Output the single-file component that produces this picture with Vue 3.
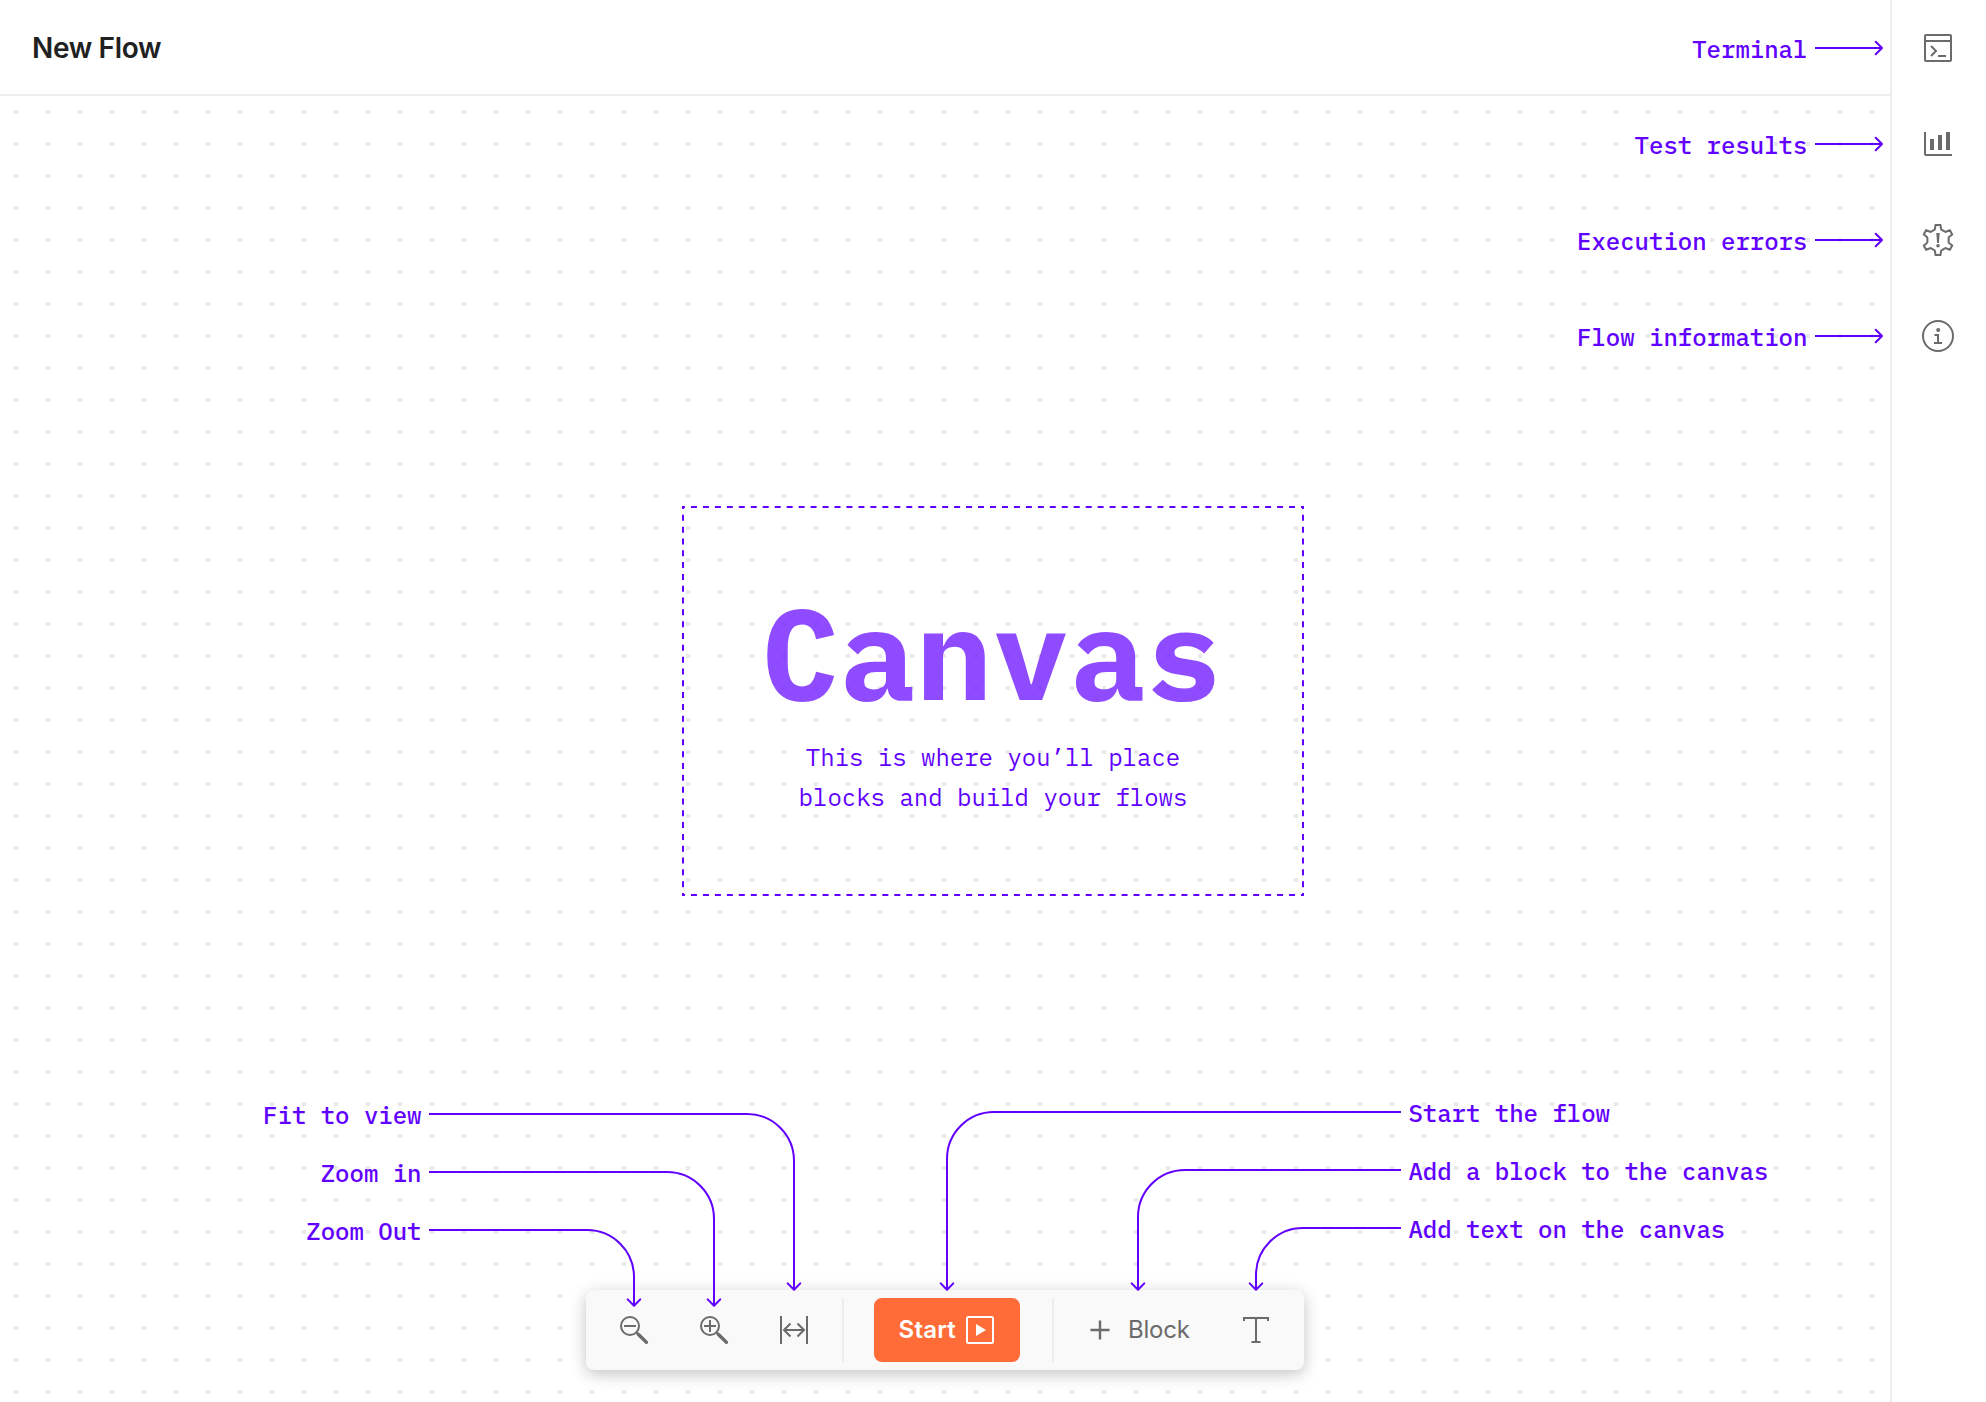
<script setup>
const panelHints = ['Terminal', 'Test results', 'Execution errors', 'Flow information']
const leftHints = ['Fit to view', 'Zoom in', 'Zoom Out']
const rightHints = ['Start the flow', 'Add a block to the canvas', 'Add text on the canvas']

// Connector lines, in page coordinates
const connectors = [
  { d: 'M429 1114H747A47 47 0 0 1 794 1161V1290', x: 794, y: 1290 },
  { d: 'M429 1172H667A47 47 0 0 1 714 1219V1306', x: 714, y: 1306 },
  { d: 'M429 1230H587A47 47 0 0 1 634 1277V1306', x: 634, y: 1306 },
  { d: 'M1401 1112H994A47 47 0 0 0 947 1159V1290', x: 947, y: 1290 },
  { d: 'M1401 1170H1185A47 47 0 0 0 1138 1217V1290', x: 1138, y: 1290 },
  { d: 'M1401 1228H1303A47 47 0 0 0 1256 1275V1290', x: 1256, y: 1290 },
]
</script>

<template>
  <div class="page">
    <div class="main">
      <header class="header">
        <h1>New Flow</h1>
      </header>

      <section class="canvas">
        <div class="dropzone">
          <svg class="dashes" width="622" height="390" fill="none" stroke="#6100ff" stroke-width="2">
            <path d="M0 1H622M0 389H622" stroke-dasharray="6 5.9615" stroke-dashoffset="3" />
            <path d="M1 0V390M621 0V390" stroke-dasharray="6 5.8182" stroke-dashoffset="3" />
          </svg>
          <h2>Canvas</h2>
          <p>This is where you’ll place<br />blocks and build your flows</p>
        </div>

        <nav class="toolbar">
          <div class="group zoom">
            <button>
              <svg width="32" height="32" viewBox="0 0 32 32" fill="none" stroke="#6b6b6b" stroke-width="2">
                <circle cx="12" cy="12" r="9" />
                <path d="M6 12h12" />
                <path d="M18 18l3 3" />
                <path d="M20.2 20.2l8.2 8" stroke-width="3.4" stroke-linecap="round" />
              </svg>
            </button>
            <button>
              <svg width="32" height="32" viewBox="0 0 32 32" fill="none" stroke="#6b6b6b" stroke-width="2">
                <circle cx="12" cy="12" r="9" />
                <path d="M6 12h12M12 6v12" />
                <path d="M18 18l3 3" />
                <path d="M20.2 20.2l8.2 8" stroke-width="3.4" stroke-linecap="round" />
              </svg>
            </button>
            <button>
              <svg width="32" height="32" viewBox="0 0 32 32" fill="none" stroke="#6b6b6b" stroke-width="2">
                <path d="M3 2v28M29 2v28M6 16h20M12.5 9.5L6 16l6.5 6.5M19.5 9.5L26 16l-6.5 6.5" />
              </svg>
            </button>
          </div>
          <div class="group run">
            <button class="start">
              <span>Start</span>
              <svg width="28" height="28" viewBox="0 0 28 28" fill="none">
                <rect x="1" y="1" width="26" height="26" rx="1.5" stroke="#fff" stroke-width="2" />
                <path d="M10 8l10 6-10 6z" fill="#fff" />
              </svg>
            </button>
          </div>
          <div class="group add">
            <button class="block">
              <svg width="20" height="20" viewBox="0 0 20 20" stroke="#6b6b6b" stroke-width="2.4">
                <path d="M.5 10h19M10 .5v19" />
              </svg>
              <span>Block</span>
            </button>
            <button>
              <svg width="32" height="32" viewBox="0 0 32 32" fill="none" stroke="#6b6b6b" stroke-width="2">
                <path d="M4 7V4h24v3M16 4v24M11.5 28h9" />
              </svg>
            </button>
          </div>
        </nav>
      </section>
    </div>

    <aside class="sidebar">
      <button>
        <svg width="32" height="32" viewBox="0 0 32 32" fill="none" stroke="#6b6b6b" stroke-width="2">
          <rect x="3" y="3" width="26" height="26" rx="1" />
          <path d="M3 9h26M9 14l5 5-5 5M16 24h8" />
        </svg>
      </button>
      <button>
        <svg width="32" height="32" viewBox="0 0 32 32" fill="none" stroke="#6b6b6b">
          <path d="M3 4v22q0 1 1 1h26" stroke-width="2" />
          <path d="M10 11v11M18 7v15M26 4v18" stroke-width="4" />
        </svg>
      </button>
      <button>
        <svg width="32" height="32" viewBox="0 0 32 32" fill="none" stroke="#6b6b6b" stroke-width="2">
          <path d="M13.6 1h4.8l.8 4.2q.1.5.6.7l3.1 1.8q.5.3 1 .1l4-1.5 2.3 4.1-3.2 2.7q-.4.4-.4.9v4q0 .5.4.9l3.2 2.7-2.3 4.1-4-1.5q-.5-.2-1 .1l-3.1 1.8q-.5.2-.6.7l-.8 4.2h-4.8l-.8-4.2q-.1-.5-.6-.7l-3.100-1.800q-.5-.3-1-.1l-4 1.5-2.300-4.100 3.200-2.700q.4-.4.4-.9v-4q0-.5-.4-.9l-3.200-2.700 2.300-4.100 4 1.500q.5.200 1-.1l3.100-1.800q.5-.2.600-.7z" />
          <path d="M14.300 9h3.400l-.8 10h-1.800z" fill="#6b6b6b" stroke="none" />
          <circle cx="16" cy="21.700" r="1.800" fill="#6b6b6b" stroke="none" />
        </svg>
      </button>
      <button>
        <svg width="32" height="32" viewBox="0 0 32 32" fill="none" stroke="#6b6b6b" stroke-width="2">
          <circle cx="16" cy="16" r="15" />
          <path d="M12.5 15H16v8M12 23h8" />
          <circle cx="16.2" cy="10" r="2" fill="#6b6b6b" stroke="none" />
        </svg>
      </button>
    </aside>

    <!-- Annotation layer -->
    <div class="hints panel-hints">
      <div v-for="hint in panelHints" :key="hint" class="panel-hint">
        <span>{{ hint }}</span>
        <svg width="69" height="16" fill="none" stroke="#6100ff" stroke-width="2">
          <path d="M0 8h67" />
          <path d="M60.7 1.7L67 8l-6.3 6.3" stroke-linecap="round" stroke-linejoin="round" />
        </svg>
      </div>
    </div>
    <div class="hints left-hints">
      <span v-for="hint in leftHints" :key="hint">{{ hint }}</span>
    </div>
    <div class="hints right-hints">
      <span v-for="hint in rightHints" :key="hint">{{ hint }}</span>
    </div>
    <svg class="connectors" width="1986" height="1402" fill="none" stroke="#6100ff" stroke-width="2">
      <g v-for="c in connectors" :key="c.d">
        <path :d="c.d" />
        <path
          :d="`M${c.x - 6.3} ${c.y - 6.6}L${c.x} ${c.y - 0.3}L${c.x + 6.3} ${c.y - 6.6}`"
          stroke-linecap="round"
          stroke-linejoin="round"
        />
      </g>
    </svg>
  </div>
</template>

<style>
body {
  margin: 0;
  background: #fff;
}
</style>

<style scoped>
.page {
  position: relative;
  display: flex;
  width: 1986px;
  height: 1402px;
  overflow: hidden;
  background: #fff;
  font-family: Inter, sans-serif;
}
.main {
  flex: 1;
  display: flex;
  flex-direction: column;
}
.header {
  box-sizing: border-box;
  height: 96px;
  display: flex;
  align-items: center;
  padding-left: 32px;
  border-bottom: 2px solid #ededed;
}
h1 {
  margin: 0;
  padding-top: 2px;
  font-size: 28px;
  font-weight: 600;
  line-height: 40px;
  letter-spacing: -0.34px;
  color: #212121;
}
.canvas {
  flex: 1;
  display: flex;
  flex-direction: column;
  align-items: center;
  justify-content: space-between;
  padding: 410px 0 32px;
  background: conic-gradient(from 90deg at 28px 28px, #e9e9e9 90deg, transparent 0) -14px -14px / 32px 32px;
}
.dropzone {
  position: relative;
  box-sizing: border-box;
  width: 622px;
  height: 390px;
  margin-left: 96px;
  padding-top: 72px;
  text-align: center;
  font-family: "IBM Plex Mono", "Liberation Mono", monospace;
  color: #6100ff;
}
.dashes {
  position: absolute;
  left: 0;
  top: 0;
}
h2 {
  margin: 0 1px 11px 0;
  font-size: 128px;
  line-height: 148px;
  font-weight: 700;
  opacity: 0.7;
}
p {
  margin: 0;
  font-size: 24px;
  line-height: 40px;
}
button {
  display: flex;
  align-items: center;
  justify-content: center;
  width: 32px;
  height: 32px;
  padding: 0;
  border: 0;
  background: none;
  font: 24px Inter, sans-serif;
  color: #6b6b6b;
}
button span {
  padding-bottom: 2px;
}
svg {
  display: block;
  flex: none;
}
.toolbar {
  box-sizing: border-box;
  display: flex;
  width: 718px;
  height: 80px;
  padding: 8px 0;
  border-radius: 8px;
  background: #f9f9f9;
  box-shadow: 0 4px 16px rgba(0, 0, 0, 0.24);
}
.group {
  box-sizing: border-box;
  display: flex;
  align-items: center;
}
.zoom {
  width: 258px;
  gap: 48px;
  padding-left: 32px;
  border-right: 2px solid #ededed;
}
.run {
  width: 210px;
  padding-left: 30px;
  border-right: 2px solid #ededed;
}
.add {
  padding-left: 36px;
}
.start {
  box-sizing: border-box;
  justify-content: flex-end;
  width: 146px;
  height: 64px;
  padding-right: 26px;
  gap: 10px;
  border-radius: 8px;
  background: #ff6c37;
  color: #fff;
  font-weight: 600;
  letter-spacing: 0.2px;
}
.block {
  justify-content: flex-start;
  width: 102px;
  gap: 18px;
  margin-right: 48px;
  letter-spacing: -0.2px;
}
.sidebar {
  box-sizing: border-box;
  width: 96px;
  display: flex;
  flex-direction: column;
  align-items: center;
  gap: 64px;
  padding: 32px 2px 0 0;
  border-left: 2px solid #ededed;
}
.hints {
  position: absolute;
  display: flex;
  flex-direction: column;
  font: 500 24px "IBM Plex Mono", "Liberation Mono", monospace;
  color: #6100ff;
  white-space: pre;
}
.panel-hints {
  top: 0;
  right: 102px;
  align-items: flex-end;
}
.panel-hint {
  display: flex;
  align-items: center;
  gap: 7.6px;
  height: 96px;
}
.panel-hint span {
  line-height: 32px;
  padding-top: 2px;
}
.left-hints {
  top: 1086px;
  right: 1564.5px;
  align-items: flex-end;
  line-height: 58px;
}
.right-hints {
  top: 1084px;
  left: 1408.4px;
  line-height: 58px;
}
.connectors {
  position: absolute;
  left: 0;
  top: 0;
  pointer-events: none;
}
</style>
